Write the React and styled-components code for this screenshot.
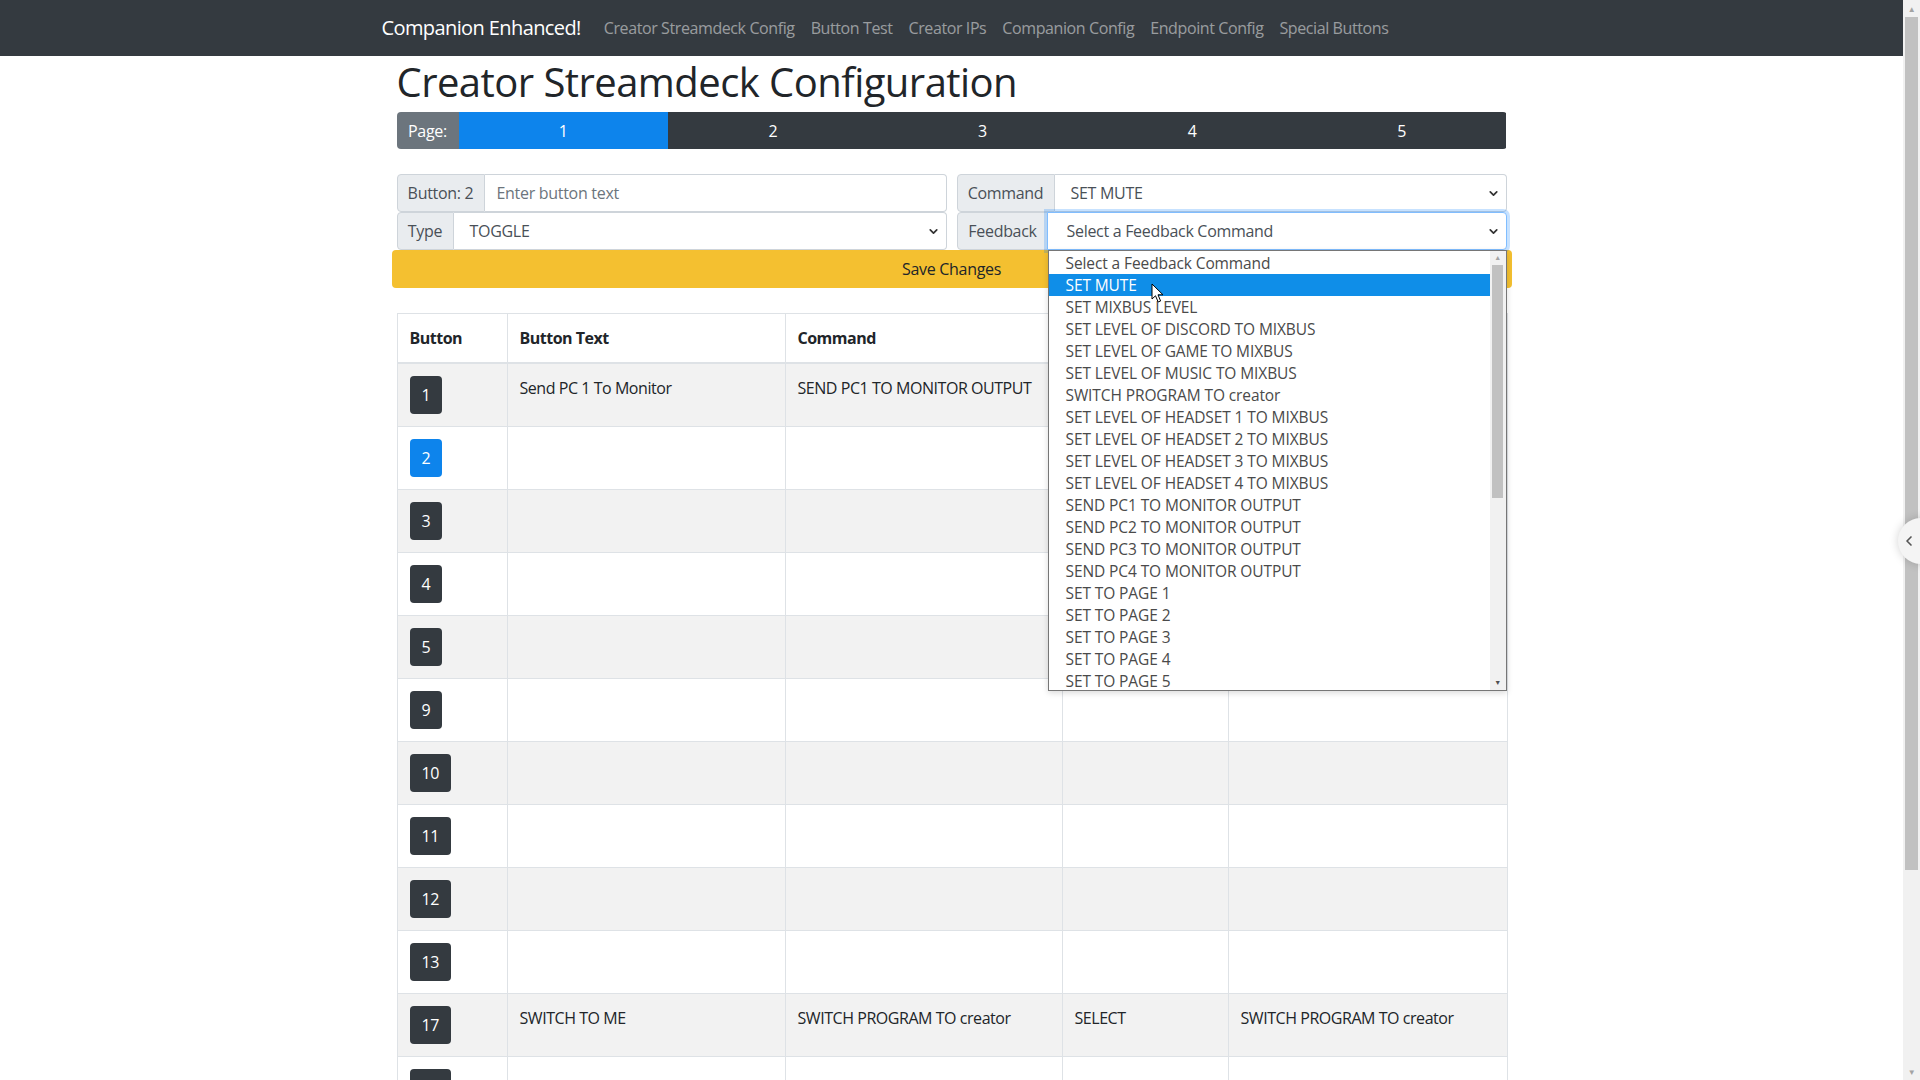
import React from 'react';
import styled, { createGlobalStyle, css } from 'styled-components';
import { ChevronDown, ChevronLeft } from 'lucide-react';

const FONT = '"Open Sans", "Noto Sans", "Liberation Sans", sans-serif';

const GlobalStyle = createGlobalStyle`
  * { box-sizing: border-box; }
  html, body {
    margin: 0;
    padding: 0;
    overflow: hidden;
    background: #fff;
  }
  body {
    font-family: ${FONT};
    font-size: 16px;
    line-height: 1.5;
    color: #212529;
    letter-spacing: -0.3px;
  }
`;

// Layout shell
const Shell = styled.div`
  position: relative;
  display: flex;
  height: 100vh;
  width: 100vw;
  overflow: hidden;
`;

const Viewport = styled.div`
  flex: 1;
  height: 100%;
  overflow: hidden;
`;

const PageScroll = styled.div`
  width: 17px;
  height: 100%;
  background: #f1f1f1;
  display: flex;
  flex-direction: column;
  align-items: center;
`;

const ScrollArrow = styled.div`
  width: 17px;
  height: 17px;
  display: flex;
  align-items: center;
  justify-content: center;
  color: #a3a3a3;
  font-size: 8px;
  line-height: 1;
`;

const ScrollThumb = styled.div`
  width: 13px;
  height: ${(p) => p.$h}px;
  background: #c1c1c1;
`;

const Spacer = styled.div`
  flex: 1;
`;

const SideHandle = styled.div`
  position: absolute;
  right: -24px;
  top: 518px;
  width: 46px;
  height: 46px;
  border-radius: 50%;
  background: #f4f4f4;
  box-shadow: 0 0 10px rgba(0, 0, 0, 0.18);
  display: flex;
  align-items: center;
  padding-left: 3px;
  color: #555;
`;

// Navbar
const Navbar = styled.nav`
  background: #343a40;
  height: 56px;
`;

const NavInner = styled.div`
  width: 1140px;
  height: 100%;
  margin: 0 auto;
  display: flex;
  align-items: center;
`;

const Brand = styled.span`
  font-size: 20px;
  color: #fff;
  margin-right: 15px;
  letter-spacing: -0.6px;
`;

const NavLink = styled.span`
  color: rgba(255, 255, 255, 0.5);
  padding: 0 8px;
  font-size: 16px;
  letter-spacing: -0.4px;
`;

// Main content
const Container = styled.main`
  width: 1110px;
  margin: 0 auto;
`;

const Title = styled.h1`
  font-size: 40px;
  font-weight: 500;
  line-height: 1.2;
  margin: 2px 0 6px;
  letter-spacing: -0.55px;
  color: #212529;
`;

const PageBar = styled.div`
  display: flex;
  height: 37px;
  margin-bottom: 25px;
  border-radius: 4px;
  overflow: hidden;
`;

const PageLabel = styled.div`
  width: 62px;
  background: #6c757d;
  color: #fff;
  display: flex;
  align-items: center;
  justify-content: center;
`;

const PageButton = styled.div`
  flex: 1;
  display: flex;
  align-items: center;
  justify-content: center;
  color: #fff;
  background: ${(p) => (p.$active ? '#0d84ec' : '#343a40')};
`;

const Form = styled.div`
  display: grid;
  grid-template-columns: 1fr 1fr;
  margin: 0 -5px;
`;

const InputGroup = styled.div`
  display: flex;
  height: 38px;
  margin: 0 5px;
`;

const Addon = styled.div`
  width: ${(p) => p.$w}px;
  flex-shrink: 0;
  background: #e9ecef;
  border: 1px solid #ced4da;
  border-radius: 4px 0 0 4px;
  color: #495057;
  display: flex;
  align-items: center;
  justify-content: center;
`;

const Field = styled.div`
  position: relative;
  flex: 1;
  display: flex;
  align-items: center;
  border: 1px solid #ced4da;
  border-left: none;
  border-radius: 0 4px 4px 0;
  padding: 0 6px 0 ${(p) => (p.$select ? 16 : 12)}px;
  color: ${(p) => (p.$placeholder ? '#6c757d' : '#495057')};
  background: #fff;
  ${(p) =>
    p.$focus &&
    css`
      border: 1px solid #80bdff;
      box-shadow: 0 0 0 3px rgba(0, 123, 255, 0.22);
      padding-left: 19px;
      margin-left: -2px;
      z-index: 2;
    `}
`;

const FieldText = styled.span`
  flex: 1;
`;

const SaveButton = styled.div`
  grid-column: 1 / -1;
  height: 38px;
  margin-bottom: 25px;
  background: #f4c030;
  border-radius: 4px;
  color: #212529;
  display: flex;
  align-items: center;
  justify-content: center;
`;

// Dropdown list of the open select
const DropList = styled.div`
  position: absolute;
  top: calc(100% + 1px);
  left: 0;
  right: -1px;
  height: 441px;
  background: #fff;
  border: 1px solid #767676;
  box-shadow: 0 2px 6px rgba(0, 0, 0, 0.15);
  display: flex;
  z-index: 5;
  overflow: hidden;
`;

const Options = styled.div`
  flex: 1;
  padding-top: 1px;
`;

const Option = styled.div`
  height: 22px;
  line-height: 22px;
  padding-left: 17px;
  font-size: 15.5px;
  letter-spacing: -0.1px;
  white-space: nowrap;
  color: ${(p) => (p.$selected ? '#fff' : '#4a4a4a')};
  background: ${(p) => (p.$selected ? '#0f8ee8' : 'transparent')};
`;

const ListScroll = styled.div`
  width: 16px;
  background: #f1f1f1;
  display: flex;
  flex-direction: column;
  align-items: center;
`;

const ListArrow = styled.div`
  height: 14px;
  font-size: 7px;
  line-height: 14px;
  color: ${(p) => (p.$dark ? '#505050' : '#a3a3a3')};
`;

const ListThumb = styled.div`
  width: 11px;
  height: 233px;
  background: #c1c1c1;
`;

const Cursor = styled.svg`
  position: absolute;
  left: 103px;
  top: 70px;
  z-index: 6;
`;

// Table
const Table = styled.table`
  width: 1110px;
  border-collapse: collapse;
  table-layout: fixed;
`;

const Th = styled.th`
  text-align: left;
  font-weight: 700;
  padding: 12px;
  border: 1px solid #dee2e6;
  border-bottom-width: 2px;
  vertical-align: bottom;
  letter-spacing: -0.5px;
`;

const Tr = styled.tr`
  background: ${(p) => (p.$striped ? '#f2f2f2' : '#fff')};
`;

const Td = styled.td`
  padding: 12px;
  border: 1px solid #dee2e6;
  vertical-align: top;
  height: 63px;
  white-space: nowrap;
  letter-spacing: -0.45px;
`;

const CellButton = styled.span`
  display: inline-block;
  height: 38px;
  line-height: 38px;
  padding: 0 12px;
  border-radius: 4px;
  color: #fff;
  background: ${(p) => (p.$active ? '#0d84ec' : '#343a40')};
`;

const navLinks = [
  'Creator Streamdeck Config',
  'Button Test',
  'Creator IPs',
  'Companion Config',
  'Endpoint Config',
  'Special Buttons',
];

const feedbackOptions = [
  'Select a Feedback Command',
  'SET MUTE',
  'SET MIXBUS LEVEL',
  'SET LEVEL OF DISCORD TO MIXBUS',
  'SET LEVEL OF GAME TO MIXBUS',
  'SET LEVEL OF MUSIC TO MIXBUS',
  'SWITCH PROGRAM TO creator',
  'SET LEVEL OF HEADSET 1 TO MIXBUS',
  'SET LEVEL OF HEADSET 2 TO MIXBUS',
  'SET LEVEL OF HEADSET 3 TO MIXBUS',
  'SET LEVEL OF HEADSET 4 TO MIXBUS',
  'SEND PC1 TO MONITOR OUTPUT',
  'SEND PC2 TO MONITOR OUTPUT',
  'SEND PC3 TO MONITOR OUTPUT',
  'SEND PC4 TO MONITOR OUTPUT',
  'SET TO PAGE 1',
  'SET TO PAGE 2',
  'SET TO PAGE 3',
  'SET TO PAGE 4',
  'SET TO PAGE 5',
];

const rows = [
  { id: 1, text: 'Send PC 1 To Monitor', command: 'SEND PC1 TO MONITOR OUTPUT' },
  { id: 2, active: true },
  { id: 3 },
  { id: 4 },
  { id: 5 },
  { id: 9 },
  { id: 10 },
  { id: 11 },
  { id: 12 },
  { id: 13 },
  { id: 17, text: 'SWITCH TO ME', command: 'SWITCH PROGRAM TO creator', type: 'SELECT', feedback: 'SWITCH PROGRAM TO creator' },
  { id: 18 },
];

const Chevron = () => <ChevronDown size={13} strokeWidth={3.2} color="#333" />;

export default function App() {
  return (
    <>
      <GlobalStyle />
      <Shell>
        <Viewport>
          <Navbar>
            <NavInner>
              <Brand>Companion Enhanced!</Brand>
              {navLinks.map((l) => (
                <NavLink key={l}>{l}</NavLink>
              ))}
            </NavInner>
          </Navbar>

          <Container>
            <Title>Creator Streamdeck Configuration</Title>

            <PageBar>
              <PageLabel>Page:</PageLabel>
              {[1, 2, 3, 4, 5].map((n) => (
                <PageButton key={n} $active={n === 1}>
                  {n}
                </PageButton>
              ))}
            </PageBar>

            <Form>
              <InputGroup>
                <Addon $w={88}>Button: 2</Addon>
                <Field $placeholder>
                  <FieldText>Enter button text</FieldText>
                </Field>
              </InputGroup>
              <InputGroup>
                <Addon $w={98}>Command</Addon>
                <Field $select>
                  <FieldText>SET MUTE</FieldText>
                  <Chevron />
                </Field>
              </InputGroup>
              <InputGroup>
                <Addon $w={57}>Type</Addon>
                <Field $select>
                  <FieldText>TOGGLE</FieldText>
                  <Chevron />
                </Field>
              </InputGroup>
              <InputGroup>
                <Addon $w={92}>Feedback</Addon>
                <Field $select $focus>
                  <FieldText>Select a Feedback Command</FieldText>
                  <Chevron />
                  <DropList>
                    <Options>
                      {feedbackOptions.map((o) => (
                        <Option key={o} $selected={o === 'SET MUTE'}>
                          {o}
                        </Option>
                      ))}
                    </Options>
                    <ListScroll>
                      <ListArrow>▲</ListArrow>
                      <ListThumb />
                      <Spacer />
                      <ListArrow $dark>▼</ListArrow>
                    </ListScroll>
                  </DropList>
                  <Cursor width="14" height="21" viewBox="0 0 14 21">
                    <path
                      d="M1 1 L1 16 L4.5 12.8 L7.2 19 L9.6 18 L7 11.8 L12 11.8 Z"
                      fill="#fff"
                      stroke="#000"
                      strokeWidth="1"
                      strokeLinejoin="round"
                    />
                  </Cursor>
                </Field>
              </InputGroup>
              <SaveButton>Save Changes</SaveButton>
            </Form>

            <Table>
              <colgroup>
                <col style={{ width: 110 }} />
                <col style={{ width: 278 }} />
                <col style={{ width: 277 }} />
                <col style={{ width: 166 }} />
                <col style={{ width: 279 }} />
              </colgroup>
              <thead>
                <tr>
                  <Th>Button</Th>
                  <Th>Button Text</Th>
                  <Th>Command</Th>
                  <Th>Type</Th>
                  <Th>Feedback</Th>
                </tr>
              </thead>
              <tbody>
                {rows.map((r, i) => (
                  <Tr key={r.id} $striped={i % 2 === 0}>
                    <Td>
                      <CellButton $active={r.active}>{r.id}</CellButton>
                    </Td>
                    <Td>{r.text}</Td>
                    <Td>{r.command}</Td>
                    <Td>{r.type}</Td>
                    <Td>{r.feedback}</Td>
                  </Tr>
                ))}
              </tbody>
            </Table>
          </Container>
        </Viewport>

        <PageScroll>
          <ScrollArrow>▲</ScrollArrow>
          <ScrollThumb $h={853} />
          <Spacer />
          <ScrollArrow>▼</ScrollArrow>
        </PageScroll>
        <SideHandle>
          <ChevronLeft size={16} strokeWidth={2.5} />
        </SideHandle>
      </Shell>
    </>
  );
}
